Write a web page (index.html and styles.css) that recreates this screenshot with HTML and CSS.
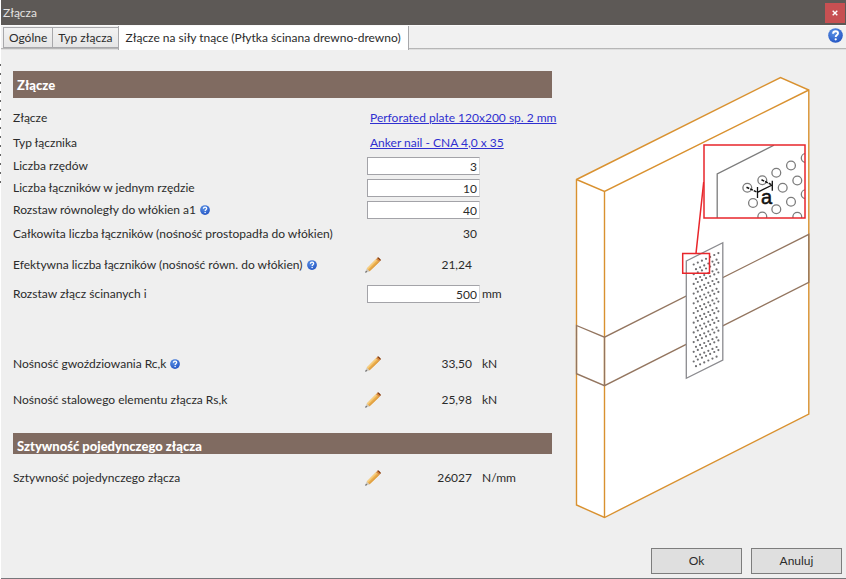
FILE: index.html
```html
<!DOCTYPE html>
<html lang="pl">
<head>
<meta charset="utf-8">
<title>Złącza</title>
<meta name="viewport" content="width=device-width, initial-scale=1">
<link rel="stylesheet" href="styles.css">
</head>
<body>
<svg class="sprite" aria-hidden="true">
  <defs>
    <radialGradient id="blue" cx="0.4" cy="0.3" r="0.8">
      <stop offset="0" stop-color="#5b93e6"/>
      <stop offset="1" stop-color="#1f4fc0"/>
    </radialGradient>
    <symbol id="help" viewBox="0 0 16 16">
      <circle cx="8" cy="8" r="7.8" fill="url(#blue)"/>
      <path d="M5.4 6.1C5.5 4.4 6.5 3.5 8.1 3.5C9.7 3.5 10.7 4.4 10.7 5.7C10.7 7.5 8.2 7.6 8.2 9.6" fill="none" stroke="#fff" stroke-width="2"/>
      <circle cx="8.2" cy="12" r="1.2" fill="#fff"/>
    </symbol>
    <symbol id="pencil" viewBox="0 0 16 16">
      <path d="M0.2 15.8L1.8 11.4L4.6 14.2Z" fill="#c9c3b8"/>
      <path d="M0.2 15.8L0.9 13.8L2.2 15.1Z" fill="#55585e"/>
      <path d="M1.8 11.4L11 2.2L14 5.2L4.6 14.2Z" fill="#edb250"/>
      <path d="M1.8 11.4L11 2.2L12 3.2L2.8 12.4Z" fill="#f7cf82"/>
      <path d="M3.7 13.3L13 4.2L14 5.2L4.6 14.2Z" fill="#e0a044"/>
      <path d="M11 2.2L12.4 0.8Q13 0.3 13.8 0.8L15.5 2.5Q16 3.1 15.4 3.8L14 5.2Z" fill="#d6863a"/>
      <path d="M12.4 0.8Q13 0.3 13.8 0.8L15.5 2.5Q16 3.1 15.4 3.8Z" fill="#6b2f18"/>
    </symbol>
  </defs>
</svg>

<div class="window">
  <header class="titlebar">
    <h1 class="title">Złącza</h1>
    <button class="close" type="button" aria-label="Zamknij">
      <svg viewBox="0 0 6 6"><path d="M0.7 0.7L5.3 5.3M5.3 0.7L0.7 5.3"/></svg>
    </button>
  </header>

  <nav class="tabs">
    <button class="tab" type="button">Ogólne</button>
    <button class="tab" type="button">Typ złącza</button>
    <button class="tab active" type="button">Złącze na siły tnące (Płytka ścinana drewno-drewno)</button>
    <button class="tabs-help" type="button" aria-label="Pomoc"><svg><use href="#help"/></svg></button>
  </nav>

  <main class="content">
    <form class="form" id="joint">
      <h2 class="section">Złącze</h2>
      <div class="rows">
        <div class="row link-row"><span>Złącze</span><a class="link" href="#plate">Perforated plate 120x200 sp. 2 mm</a></div>
        <div class="row link-row"><span>Typ łącznika</span><a class="link" href="#nail">Anker nail - CNA 4,0 x 35</a></div>
        <div class="row field-row"><label for="rows">Liczba rzędów</label><input id="rows" type="text" value="3"></div>
        <div class="row field-row"><label for="per-row">Liczba łączników w jednym rzędzie</label><input id="per-row" type="text" value="10"></div>
        <div class="row field-row"><div class="label"><label for="a1">Rozstaw równoległy do włókien a1</label><svg class="hint"><use href="#help"/></svg></div><input id="a1" type="text" value="40"></div>
        <div class="row text-row"><span>Całkowita liczba łączników (nośność prostopadła do włókien)</span><span class="total">30</span></div>
        <div class="row edit-row"><div class="label"><span>Efektywna liczba łączników (nośność równ. do włókien)</span><svg class="hint"><use href="#help"/></svg></div><div class="value"><button class="edit" type="button" aria-label="Edytuj"><svg><use href="#pencil"/></svg></button><span>21,24</span></div></div>
        <div class="row field-row"><label for="spacing">Rozstaw złącz ścinanych i</label><input id="spacing" type="text" value="500"><span>mm</span></div>
      </div>
      <div class="rows results">
        <div class="row edit-row"><div class="label"><span>Nośność gwoździowania Rc,k</span><svg class="hint"><use href="#help"/></svg></div><div class="value"><button class="edit" type="button" aria-label="Edytuj"><svg><use href="#pencil"/></svg></button><span>33,50</span></div><span>kN</span></div>
        <div class="row edit-row"><span>Nośność stalowego elementu złącza Rs,k</span><div class="value"><button class="edit" type="button" aria-label="Edytuj"><svg><use href="#pencil"/></svg></button><span>25,98</span></div><span>kN</span></div>
      </div>
      <h2 class="section slim">Sztywność pojedynczego złącza</h2>
      <div class="rows">
        <div class="row edit-row"><span>Sztywność pojedynczego złącza</span><div class="value"><button class="edit" type="button" aria-label="Edytuj"><svg><use href="#pencil"/></svg></button><span>26027</span></div><span>N/mm</span></div>
      </div>
    </form>

    <svg class="diagram" viewBox="575 71 240 455" role="img" aria-label="Schemat złącza">
      <defs>
        <clipPath id="inset"><rect x="704" y="145" width="101" height="73"/></clipPath>
        <g id="pair" class="holes">
          <path d="M693.7 264.5L718.4 253.1" stroke-dasharray="0 4.53"/>
          <path d="M696 269.2L716.6 259.7" stroke-dasharray="0 4.53"/>
        </g>
        <g id="quad"><use href="#pair"/><use href="#pair" y="9.7"/></g>
      </defs>
      <path fill="#fff" d="M576.5 179.5L780.5 77.5L808.8 90V414L604.5 517.5L576.5 505Z"/>
      <g class="wood">
        <path d="M576.5 179.5L780.5 77.5L808.8 90V414L604.5 517.5L576.5 505Z"/>
        <path d="M576.5 179.5L604.5 191.5L808.8 90M604.5 191.5V517.5"/>
      </g>
      <g class="beam">
        <path d="M576.5 325.5L604.5 337.2L808.8 234.3V282.3L604.5 385.7L576.5 373.7ZM604.5 337.2V385.7"/>
      </g>
      <path class="plate" d="M686.3 261L722.8 242.7V360L686.3 378.3Z"/>
      <use href="#quad"/>
      <use href="#quad" y="19.4"/>
      <use href="#quad" y="38.8"/>
      <use href="#quad" y="58.2"/>
      <use href="#quad" y="77.6"/>
      <use href="#pair" y="97"/>
      <path class="mark" d="M703.7 182L696 253.3M682.7 253.5H709.5V273.3H682.7Z"/>
      <rect x="704" y="145" width="101" height="73" fill="#fff"/>
      <g clip-path="url(#inset)">
        <path fill="none" stroke="#7c7c7c" stroke-width="1.3" d="M717.2 218V174L774 145.2"/>
        <g fill="#fff" stroke="#7c7c7c" stroke-width="1.3">
          <circle cx="747.3" cy="187.7" r="4.4"/><circle cx="762.3" cy="180.3" r="4.4"/>
          <circle cx="776.3" cy="172.7" r="4.4"/><circle cx="791" cy="165.5" r="4.4"/>
          <circle cx="805.7" cy="158" r="4.4"/><circle cx="753" cy="203" r="4.4"/>
          <circle cx="782.7" cy="187.7" r="4.4"/><circle cx="797.3" cy="180.5" r="4.4"/>
          <circle cx="776.3" cy="209.2" r="4.4"/><circle cx="791" cy="201.7" r="4.4"/>
          <circle cx="805.7" cy="194.3" r="4.4"/><circle cx="762.3" cy="216.5" r="4.4"/>
          <circle cx="797.3" cy="216.7" r="4.4"/>
        </g>
        <path fill="none" stroke="#111" stroke-width="1.3" d="M757.5 192.3L772.3 185M757.5 187V198M772.3 180.7V190.7"/>
        <path fill="none" stroke="#111" stroke-width="1.5" stroke-dasharray="3 1" d="M746.5 187.2L757.5 192.3M761.5 179.8L772.3 185"/>
        <text class="dim" x="761" y="203.7">a</text>
      </g>
      <rect class="mark" x="704" y="145" width="101" height="73"/>
    </svg>
  </main>

  <footer class="actions">
    <button class="action" type="submit" form="joint">Ok</button>
    <button class="action" type="button">Anuluj</button>
  </footer>
</div>
</body>
</html>
```
FILE: styles.css
```css
* { box-sizing: border-box; }

body {
  margin: 0;
  background: #fff repeating-linear-gradient(#666 0 2px, #fff 2px 9px) 0 64px / 1px 126px no-repeat;
  color: #2b2b2b;
  font: 12px/16px Lato, "Noto Sans", sans-serif;
}

button, input { font: inherit; color: inherit; }
button { padding: 0; border: 0; background: none; }
h1, h2 { margin: 0; }

.sprite { position: absolute; width: 0; height: 0; }

.window {
  display: flex;
  flex-direction: column;
  min-height: 100vh;
  margin-left: 1px;
  border-bottom: 1px solid #77777b;
  background: #efefef;
}

.titlebar {
  display: flex;
  align-items: center;
  justify-content: space-between;
  height: 25px;
  padding: 0 1px 0 2px;
  background: #5d5956;
}
.title { color: #e4e2e0; font-size: 12px; font-weight: 400; }
.close {
  display: flex;
  align-items: center;
  justify-content: center;
  width: 20px;
  height: 20px;
  background: #c75052;
}
.close svg { width: 6px; height: 6px; fill: none; stroke: #fff; stroke-width: 1.4; }

.tabs {
  display: flex;
  align-items: flex-end;
  height: 25px;
  padding: 0 2px;
  border-top: 1px solid #fafafa;
  background: linear-gradient(#f1f1f1 22px, #a9a9a9 22px, #c4c4c4 23px, #fafafa 24px);
}
.tab {
  height: 21px;
  margin-bottom: 2px;
  padding: 0 5px;
  border: 1px solid #a8a8ab;
  border-right-width: 0;
  background: linear-gradient(#f2f2f2, #e6e6e6);
  white-space: nowrap;
}
.tab.active {
  height: 24px;
  margin-bottom: 0;
  padding: 0 7px;
  border-width: 0 1px 0 1px;
  background: #fff;
}
.tabs-help { width: 15px; height: 15px; margin: 0 1px 7px auto; }
.tabs-help svg { display: block; width: 15px; height: 15px; }

.content {
  display: flex;
  align-items: flex-start;
  gap: 22px;
  padding: 21px 31px 0 12px;
}
.form { flex: 540 1 0; min-width: 0; }
.diagram { display: block; flex: 240 1 0; min-width: 0; }

.section {
  display: flex;
  align-items: center;
  height: 27px;
  padding: 1px 4px 0;
  margin-right: 1px;
  background: #806b61;
  color: #fff;
  font-size: 13px;
  font-weight: 900;
}
.slim { height: 21px; padding-top: 5px; margin-top: 15px; }

.rows { padding-top: 7px; }
.results { padding-top: 41px; }
.slim + .rows { padding-top: 6px; }

.row {
  display: grid;
  grid-template-columns: minmax(0, 1fr) 113px 71px;
  column-gap: 2px;
  align-items: center;
  white-space: nowrap;
}
.link-row { height: 25px; }
.field-row { height: 22px; }
.text-row { height: 26px; }
.edit-row { height: 36px; }

.label { display: flex; align-items: center; gap: 4px; }
.hint { flex: none; width: 10px; height: 10px; }
.link { grid-column: 2 / 4; padding-left: 3px; color: #2f2fd0; }

input {
  width: 100%;
  height: 18px;
  padding: 0 2px;
  border: 1px solid #a3a3a8;
  border-right-color: #d8d8da;
  border-radius: 0;
  background: #fff;
  text-align: right;
}
.total { padding-right: 3px; text-align: right; }
.value { display: flex; align-items: center; justify-content: space-between; padding-right: 8px; }
.edit, .edit svg { display: block; width: 16px; height: 16px; }
.edit { margin-left: -2px; }

.wood { fill: none; stroke: #d9912f; stroke-width: 1.4; }
.beam { fill: none; stroke: #93755f; stroke-width: 1.3; }
.plate { fill: #fff; stroke: #8b8b8f; stroke-width: 1.3; }
.holes { fill: none; stroke: #6f6f72; stroke-width: 2.2; stroke-linecap: round; }
.mark { fill: none; stroke: #e8262b; stroke-width: 1.5; }
.dim { fill: #111; stroke: #111; stroke-width: 0.5; font: 20px "Liberation Sans", sans-serif; }

.actions {
  display: flex;
  justify-content: flex-end;
  gap: 9px;
  margin-top: auto;
  padding: 16px 4px 4px;
}
.action {
  width: 91px;
  height: 26px;
  border: 1px solid #7d7d7d;
  background: #dfdfdf;
}
```
